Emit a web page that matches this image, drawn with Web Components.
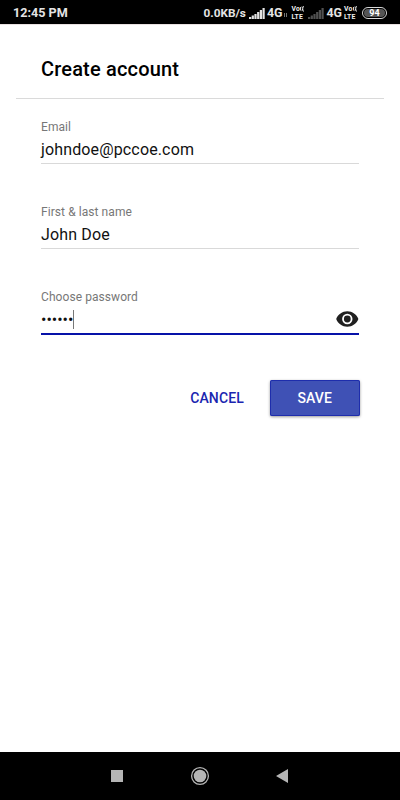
<!DOCTYPE html>
<html lang="en"><head><meta charset="utf-8"><title>Create account</title>
<style>
html,body{margin:0;height:100%;background:#fff;font-family:Roboto,"Liberation Sans",sans-serif}
body{overflow:hidden}
</style></head><body>
<phone-screen>
<status-bar slot="top"></status-bar>
<account-form>
<form-field label="Email">johndoe@pccoe.com</form-field>
<form-field label="First &amp; last name">John Doe</form-field>
<password-field label="Choose password">••••••</password-field>
<app-button slot="actions">CANCEL</app-button>
<app-button slot="actions" primary>SAVE</app-button>
</account-form>
<nav-bar slot="bottom"></nav-bar>
</phone-screen>
<script>
const define=(name,html)=>customElements.define(name,class extends HTMLElement{
  constructor(){
    super();
    this.attachShadow({mode:'open'}).innerHTML=html;
    const label=this.shadowRoot.querySelector('[data-label]');
    if(label)label.textContent=this.getAttribute('label');
  }
});

define('phone-screen',`<style>
:host{display:flex;flex-direction:column;width:400px;height:800px}
main{flex:1}
</style><slot name="top"></slot><main><slot></slot></main><slot name="bottom"></slot>`);

define('signal-bars',`<style>:host{display:block;width:16px;height:11px}svg{display:block}
:host([dim]){opacity:.35}</style><svg width="16" height="11" fill="#e4e4e4"><path d="M0 9h2.2v2H0zM2.7 7.5h2.2V11H2.7zM5.4 6h2.2v5H5.4zM8.1 4h2.2v7H8.1zM10.8 2h2.2v9h-2.2zM13.5 0h2.2v11h-2.2z"/></svg>`);

define('volte-mark',`<style>
:host{display:block;width:13px;font:700 6.8px/8px Roboto,sans-serif;color:#f0f0f0}
div{display:flex;height:8px;letter-spacing:.2px}svg{margin-top:1px}
</style><div>Vo<svg width="5" height="6" fill="none" stroke="#e4e4e4"><path d="M.6 1v3.5M2 .5q1.4 2.3 0 4.6M3.6 0q1.7 2.8 0 5.6"/></svg></div><div>LTE</div>`);

define('status-bar',`<style>
:host{display:flex;box-sizing:border-box;height:25px;padding:0 13px;background:#000;border-bottom:1px solid #e9e1e1;align-items:center;color:#e4e4e4;font-weight:700;font-size:12px;line-height:24px;white-space:nowrap}
.time{flex:1;font-size:12.6px;padding-top:2px}
.rate{padding-top:2px;margin-right:3px;font-size:11.8px}
.gen{padding-top:2px;margin-left:2px;font-size:12.4px}
signal-bars{margin-top:2px}
.data{margin:5px 3px 0 1px}
volte-mark{margin-top:1px}
.second{margin-left:4px}
.battery{box-sizing:border-box;width:25px;height:12px;border:1px solid #d8d8d8;border-radius:6px;padding:1px;margin:2px 0 0 5px}
.battery span{display:block;height:8px;border-radius:4px;background:#555;color:#fff;text-align:center;font-size:9px;line-height:9px}
</style><span class="time">12:45 PM</span><span class="rate">0.0KB/s</span><signal-bars></signal-bars><span class="gen">4G</span>
<svg class="data" width="5" height="6" fill="none" stroke="#777"><path d="M1.5 5V1M3.5 1v4"/></svg><volte-mark></volte-mark><signal-bars class="second" dim></signal-bars><span class="gen">4G</span><volte-mark style="margin-left:2px"></volte-mark><div class="battery"><span>94</span></div>`);

define('account-form',`<style>
:host{display:block}
header{box-sizing:border-box;height:74px;margin:0 16px;padding:32px 25px 0;border-bottom:1px solid #dadada;font-weight:500;font-size:20px;line-height:24px;letter-spacing:.17px;color:#000}
.fields{padding:19px 41px 0;display:grid;grid-auto-rows:85.3px}
.actions{display:flex;justify-content:flex-end;align-items:center;padding:6px 40.5px 0}
</style><header>Create account</header><div class="fields"><slot></slot></div><div class="actions"><slot name="actions"></slot></div>`);

const fieldStyle=`
:host{display:block;color:#111;font-size:16px}
label{display:block;height:17px;font-size:12px;line-height:18px;letter-spacing:.07px;color:#777}
.value{height:28.5px;box-sizing:border-box;border-bottom:1px solid #d9d9d9;line-height:29px;display:flex;letter-spacing:.14px}`;
define('form-field',`<style>${fieldStyle}</style><label data-label></label><div class="value"><slot></slot></div>`);

define('eye-icon',`<style>:host{display:block;width:24px;height:24px}svg{display:block}</style><svg width="24" height="24" viewBox="0 0 24 24"><path fill="#202020" d="M12.3 4.3C7.3 4.3 3 7.4 1.2 12c1.8 4.6 6.1 7.7 11.1 7.7s9.3-3.1 11.1-7.7c-1.8-4.6-6.1-7.7-11.1-7.7z"/><circle cx="12.3" cy="12" r="4.3" fill="none" stroke="#fff" stroke-width="1.8"/></svg>`);

define('password-field',`<style>${fieldStyle}
label{height:16px;line-height:16px}
.value{height:30.4px;border-bottom:2px solid #0712a8;letter-spacing:0}
.caret{width:1px;height:19px;margin-top:5px;background:#777}
eye-icon{margin:2px 0 0 auto}
</style><label data-label></label><div class="value"><slot></slot><span class="caret"></span><eye-icon></eye-icon></div>`);

define('app-button',`<style>
:host{display:block;box-sizing:border-box;height:36px;padding:0 26px;color:#1a26b0;font-weight:500;font-size:14px;line-height:36px;letter-spacing:.15px}
:host([primary]){width:89.5px;padding:0;text-align:center;color:#fff;background:#3f51b5;border-radius:2px;box-shadow:inset 0 0 0 1px #1e2dac,0 1px 3px #0006}
</style><slot></slot>`);

define('nav-bar',`<style>
:host{display:block;height:48px;background:#000}svg{display:block}
</style><svg width="400" height="48" fill="#b5b5b5"><path d="M111 18h12v12h-12zM288 17v14l-12-7z"/><circle cx="200" cy="24" r="6.3"/><circle cx="200" cy="24" r="8.4" fill="none" stroke="#b5b5b5" stroke-width="1.3"/></svg>`);
</script></body></html>
